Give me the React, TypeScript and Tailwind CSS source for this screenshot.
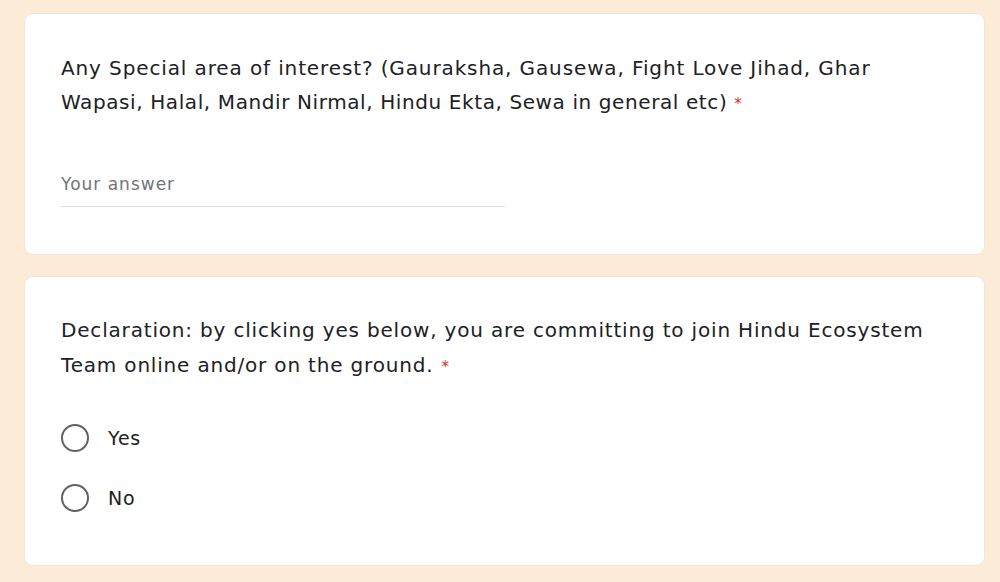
import React from 'react';

const Radio: React.FC<{ label: string }> = ({ label }) => (
  <div className="flex items-center h-[60px]">
    <span className="w-[28px] h-[28px] rounded-full border-[2.5px] border-[#5f6368] shrink-0" />
    <span className="ml-[19px] text-[19px] tracking-[0.8px] text-[#202124]">{label}</span>
  </div>
);

export default function App() {
  return (
    <div
      className="w-[1000px] h-[582px] bg-[#fcebd6] pt-[13px] pl-[24px] pr-[15px] flex flex-col gap-[21px] overflow-hidden"
      style={{ fontFamily: '"DejaVu Sans", "Liberation Sans", sans-serif' }}
    >
      {/* question 1 */}
      <div className="bg-white rounded-[9px] border border-[#f1e6d8] h-[242px] pl-[36px] pr-[30px] pt-[37px]">
        <p className="text-[20px] leading-[34px] tracking-[0.88px] text-[#202124] whitespace-nowrap">
          Any Special area of interest? (Gauraksha, Gausewa, Fight Love Jihad, Ghar
          <br />
          <span className="tracking-[0.6px]">Wapasi, Halal, Mandir Nirmal, Hindu Ekta, Sewa in general etc)</span>
          <span className="text-[#d93025] ml-[7px] text-[15px]">*</span>
        </p>
        <div className="mt-[51px] w-[444px] border-b-[1.5px] border-[#dadce0] pb-[8px]">
          <span className="text-[17px] tracking-[1px] text-[#70757a]">Your answer</span>
        </div>
      </div>

      {/* question 2 */}
      <div className="bg-white rounded-[9px] border border-[#f1e6d8] h-[290px] pl-[36px] pr-[30px] pt-[36px]">
        <p className="text-[20px] leading-[35px] tracking-[0.82px] text-[#202124] whitespace-nowrap">
          Declaration: by clicking yes below, you are committing to join Hindu Ecosystem
          <br />
          Team online and/or on the ground.
          <span className="text-[#d93025] ml-[8px] text-[15px]">*</span>
        </p>
        <div className="mt-[23px] flex flex-col">
          <Radio label="Yes" />
          <Radio label="No" />
        </div>
      </div>
    </div>
  );
}
